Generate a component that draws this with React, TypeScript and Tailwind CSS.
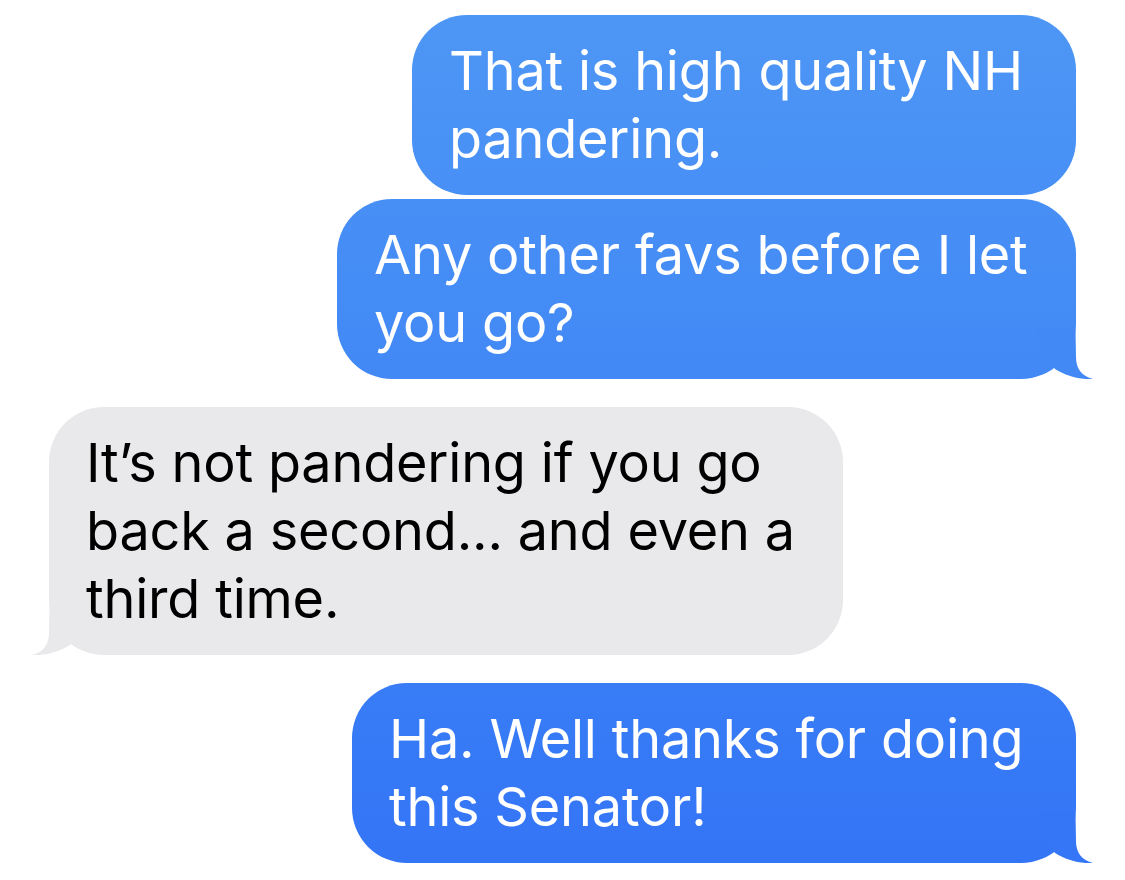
import React from 'react';

type Msg = { from: 'me' | 'them'; lines: string[]; width: string; gap: string; tail: boolean; tailColor?: string };

const messages: Msg[] = [
  { from: 'me', lines: ['That is high quality NH', 'pandering.'], width: 'w-[664px]', gap: 'mt-0', tail: false },
  { from: 'me', lines: ['Any other favs before I let', 'you go?'], width: 'w-[739px]', gap: 'mt-[4px]', tail: true, tailColor: '#4389f5' },
  { from: 'them', lines: ['It\u2019s not pandering if you go', 'back a second... and even a', 'third time.'], width: 'w-[794px]', gap: 'mt-[28px]', tail: true, tailColor: '#e9e9eb' },
  { from: 'me', lines: ['Ha. Well thanks for doing', 'this Senator!'], width: 'w-[724px]', gap: 'mt-[28px]', tail: true, tailColor: '#3576f6' },
];

// bubble tail, drawn for the right-hand side; mirrored for received messages
function Tail({ color, left }: { color: string; left: boolean }) {
  return (
    <svg
      width="60"
      height="50"
      viewBox="0 0 60 50"
      className={left ? 'absolute bottom-0 left-[-20px] -scale-x-100' : 'absolute bottom-0 right-[-20px]'}
    >
      <path d="M0 0 L39.5 1 L40 28 C40 40 46 47 57 50 C45 51 30 47 19 40 L12 30 Z" fill={color} />
    </svg>
  );
}

function Bubble({ msg }: { msg: Msg }) {
  const mine = msg.from === 'me';
  return (
    <div
      className={[
        'relative rounded-[55px] py-[22px] pl-[37px] text-[54px] leading-[68px] tracking-[-0.2px]',
        msg.width,
        msg.gap,
        mine ? 'self-end text-white bg-linear-to-b from-[#4e97f5] to-[#3374f6] bg-fixed' : 'self-start text-black bg-[#e9e9eb]',
      ].join(' ')}
    >
      {msg.lines.map((l) => (
        <span key={l} className="block whitespace-nowrap">
          {l}
        </span>
      ))}
      {msg.tail && <Tail color={msg.tailColor!} left={!mine} />}
    </div>
  );
}

export default function App() {
  return (
    <div
      className="min-h-screen bg-white flex flex-col pt-[15px] px-[49px] antialiased"
      style={{ fontFamily: 'Inter, "Noto Sans", sans-serif' }}
    >
      {messages.map((m, i) => (
        <Bubble key={i} msg={m} />
      ))}
    </div>
  );
}
